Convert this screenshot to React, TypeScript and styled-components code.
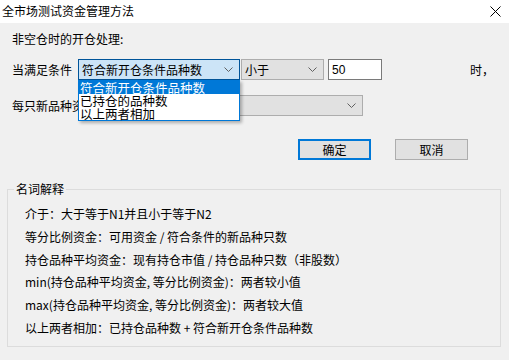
import React from "react";
import styled, { createGlobalStyle } from "styled-components";

const GlobalStyle = createGlobalStyle`
  html, body {
    margin: 0;
    padding: 0;
    background: #f0f0f0;
  }
  body {
    font-family: "Noto Sans CJK SC", "Noto Sans", sans-serif;
    font-size: 12px;
    color: #000;
  }
`;

const Window = styled.div`
  width: 509px;
  height: 360px;
  display: flex;
  flex-direction: column;
  background: #f0f0f0;
  overflow: hidden;
`;

const TitleBar = styled.div`
  height: 23px;
  flex: none;
  background: #fff;
  display: flex;
  align-items: center;
  padding-left: 2px;
  padding-right: 8px;
`;

const Title = styled.div`
  flex: 1;
  font-size: 12px;
  line-height: 16px;
  margin-top: -1px;
`;

const CloseButton = styled.div`
  width: 12px;
  height: 12px;
  display: flex;
  align-items: center;
  justify-content: center;
  margin-top: -1px;
`;

const Body = styled.div`
  flex: 1;
  display: flex;
  flex-direction: column;
  padding: 8px 8px 0 7px;
`;

const SectionLabel = styled.div`
  line-height: 16px;
  padding-left: 5px;
`;

const FormRow = styled.div<{ $top: number }>`
  display: flex;
  align-items: center;
  height: 21px;
  margin-top: ${({ $top }) => $top}px;
  padding-left: 5px;
`;

const RowLabel = styled.div`
  width: 66px;
  flex: none;
  white-space: nowrap;
  overflow: hidden;
  line-height: 16px;
`;

const ComboWrap = styled.div`
  position: relative;
  flex: none;
`;

const Combo = styled.div<{ $width: number; $focused?: boolean }>`
  box-sizing: border-box;
  width: ${({ $width }) => $width}px;
  height: 21px;
  display: flex;
  align-items: center;
  padding: 0 6px 0 3px;
  background: ${({ $focused }) => ($focused ? "#cce4f7" : "#e1e1e1")};
  border: 1px solid ${({ $focused }) => ($focused ? "#005499" : "#adadad")};
`;

const ComboText = styled.div`
  flex: 1;
  line-height: 16px;
  white-space: nowrap;
  overflow: hidden;
`;

const Chevron = styled.svg`
  flex: none;
  width: 9px;
  height: 5px;
`;

const DropList = styled.div`
  position: absolute;
  top: 100%;
  left: 0;
  width: 100%;
  box-sizing: border-box;
  background: #fff;
  border: 1px solid #0078d7;
  box-shadow: 2px 2px 3px rgba(0, 0, 0, 0.28);
  z-index: 5;
`;

const DropItem = styled.div<{ $active?: boolean }>`
  height: 13px;
  line-height: 13px;
  font-size: 12.5px;
  padding-left: 1px;
  white-space: nowrap;
  background: ${({ $active }) => ($active ? "#0078d7" : "transparent")};
  color: ${({ $active }) => ($active ? "#fff" : "#000")};
`;

const NumberInput = styled.div`
  box-sizing: border-box;
  width: 54px;
  height: 21px;
  margin-left: 4px;
  background: #fff;
  border: 1px solid #7a7a7a;
  padding-left: 3px;
  display: flex;
  align-items: center;
  font-family: "Liberation Sans", "Noto Sans", sans-serif;
  font-size: 12px;
`;

const Suffix = styled.div`
  margin-left: auto;
  margin-right: 7px;
  line-height: 16px;
`;

const ButtonRow = styled.div`
  display: flex;
  justify-content: flex-end;
  gap: 24px;
  margin-top: 23px;
  margin-right: 33px;
`;

const Button = styled.div<{ $primary?: boolean }>`
  box-sizing: border-box;
  width: 73px;
  height: 21px;
  display: flex;
  align-items: center;
  justify-content: center;
  background: #e1e1e1;
  border: ${({ $primary }) =>
    $primary ? "2px solid #0078d7" : "1px solid #adadad"};
  line-height: 16px;
`;

const GroupBox = styled.fieldset`
  margin: 21px 0 0 0;
  padding: 6px 0 6px 17px;
  border: 1px solid #dcdcdc;
  min-width: 0;
  height: 166px;
  box-sizing: border-box;
`;

const GroupTitle = styled.legend`
  margin-left: -11px;
  padding: 0 2px;
  line-height: 16px;
`;

const Line = styled.div`
  height: 22.8px;
  line-height: 22.8px;
  white-space: nowrap;
`;

const ChevronIcon = () => (
  <Chevron viewBox="0 0 9 5">
    <path d="M0.5 0.5 L4.5 4.5 L8.5 0.5" fill="none" stroke="#606060" strokeWidth="1" />
  </Chevron>
);

const explanations = [
  "介于：大于等于N1并且小于等于N2",
  "等分比例资金：可用资金 / 符合条件的新品种只数",
  "持仓品种平均资金：现有持仓市值 / 持仓品种只数（非股数）",
  "min(持仓品种平均资金, 等分比例资金)：两者较小值",
  "max(持仓品种平均资金, 等分比例资金)：两者较大值",
  "以上两者相加：已持仓品种数 + 符合新开仓条件品种数",
];

export default function App() {
  return (
    <Window>
      <GlobalStyle />
      <TitleBar>
        <Title>全市场测试资金管理方法</Title>
        <CloseButton>
          <svg width="11" height="11" viewBox="0 0 11 11">
            <path d="M0.5 0.5 L10.5 10.5 M10.5 0.5 L0.5 10.5" stroke="#000" strokeWidth="1" />
          </svg>
        </CloseButton>
      </TitleBar>
      <Body>
        <SectionLabel>非空仓时的开仓处理:</SectionLabel>
        <FormRow $top={12}>
          <RowLabel>当满足条件</RowLabel>
          <ComboWrap>
            <Combo $width={162} $focused>
              <ComboText>符合新开仓条件品种数</ComboText>
              <ChevronIcon />
            </Combo>
            <DropList>
              <DropItem $active>符合新开仓条件品种数</DropItem>
              <DropItem>已持仓的品种数</DropItem>
              <DropItem>以上两者相加</DropItem>
            </DropList>
          </ComboWrap>
          <ComboWrap style={{ marginLeft: 1 }}>
            <Combo $width={83}>
              <ComboText>小于</ComboText>
              <ChevronIcon />
            </Combo>
          </ComboWrap>
          <NumberInput>50</NumberInput>
          <Suffix>时，</Suffix>
        </FormRow>
        <FormRow $top={15}>
          <RowLabel>每只新品种资金</RowLabel>
          <ComboWrap>
            <Combo $width={285}>
              <ComboText />
              <ChevronIcon />
            </Combo>
          </ComboWrap>
        </FormRow>
        <ButtonRow>
          <Button $primary>确定</Button>
          <Button>取消</Button>
        </ButtonRow>
        <GroupBox>
          <GroupTitle>名词解释</GroupTitle>
          {explanations.map((t) => (
            <Line key={t}>{t}</Line>
          ))}
        </GroupBox>
      </Body>
    </Window>
  );
}
